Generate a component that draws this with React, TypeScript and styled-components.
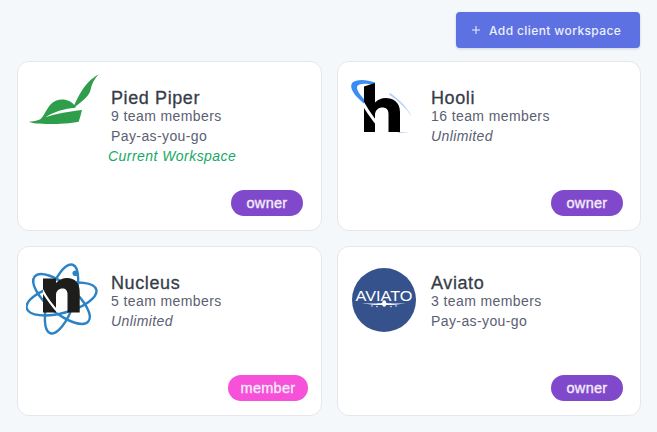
import React from 'react';
import styled, { createGlobalStyle } from 'styled-components';

type Role = 'owner' | 'member';

const GlobalStyle = createGlobalStyle`
  html, body {
    margin: 0;
    padding: 0;
    background-color: #f5f8fb;
    font-family: "Liberation Sans", Arial, sans-serif;
  }
`;

const Page = styled.div`
  width: 657px;
  height: 432px;
  box-sizing: border-box;
  padding: 12px 16px 16px 17px;
  overflow: hidden;
`;

const Toolbar = styled.div`
  display: flex;
  justify-content: flex-end;
  margin-bottom: 13px;
`;

const AddButton = styled.button`
  display: flex;
  align-items: center;
  width: 184px;
  height: 36px;
  margin-right: 1px;
  padding: 0 0 0 15px;
  border: none;
  border-radius: 4px;
  background-color: #5d71e2;
  color: #eef0fc;
  font-family: Inter, sans-serif;
  font-size: 12px;
  font-weight: 500;
  letter-spacing: 0.4px;
  box-shadow: 0 1px 3px rgba(60, 70, 120, 0.2);
`;

const PlusIcon = styled.svg`
  width: 10px;
  height: 10px;
  margin-right: 8px;
`;

const Grid = styled.div`
  display: grid;
  grid-template-columns: 305px 304px;
  grid-auto-rows: 170px;
  column-gap: 15px;
  row-gap: 15px;
`;

const Card = styled.div<{ $narrow?: boolean }>`
  display: flex;
  flex-direction: column;
  box-sizing: border-box;
  padding: 9px ${(props) => (props.$narrow ? '17px' : '18px')} 14px 8px;
  background-color: #ffffff;
  border: 1px solid #e5e7eb;
  border-radius: 12px;
`;

const CardBody = styled.div`
  display: flex;
  flex: 1;
`;

const LogoBox = styled.svg`
  flex: none;
  width: 76px;
  height: 80px;
  margin-right: 9px;
`;

const Details = styled.div`
  padding-top: 19px;
  display: flex;
  flex-direction: column;
`;

const Name = styled.div`
  font-size: 18px;
  line-height: 16px;
  letter-spacing: 0.6px;
  color: #373c49;
  -webkit-text-stroke: 0.3px #373c49;
`;

const Line = styled.div`
  font-size: 14px;
  line-height: 20px;
  letter-spacing: 0.4px;
  color: #5a6072;
`;

const PlanLine = styled(Line)<{ $italic?: boolean }>`
  font-style: ${(props) => (props.$italic ? 'italic' : 'normal')};
`;

const CurrentLine = styled(Line)`
  margin-left: -3px;
  letter-spacing: 0.45px;
  color: #18a865;
  font-style: italic;
`;

const Footer = styled.div`
  display: flex;
  justify-content: flex-end;
`;

const Badge = styled.span<{ $role: Role }>`
  display: flex;
  align-items: center;
  justify-content: center;
  width: ${(props) => (props.$role === 'member' ? '80px' : '72px')};
  height: 26px;
  margin-right: ${(props) => (props.$role === 'member' ? '-5px' : '0')};
  border-radius: 13px;
  background-color: ${(props) => (props.$role === 'member' ? '#f751d9' : '#8049cc')};
  color: #f3ecfa;
  font-size: 14.5px;
  letter-spacing: 0.3px;
  -webkit-text-stroke: 0.35px #f3ecfa;
`;

const PiedPiperLogo = () => (
  <LogoBox viewBox="0 0 76 80">
    <path
      d="M2.7 50.7 C7 50.5 11 50 14.3 48.3 C18 45 20 39 24 34 C28 29.5 33 28 38 28.5 C42 29 46 31 48.3 34 C50 30 53 24 56 19.5 C60 13 66 7 72.7 3.3 C68.5 8 65.5 13 64.5 19 C63.5 24 58 29 49.8 35.2 L49.3 36.7 C39 37.5 27 41 19.3 46.3 C30 42.5 44 40.5 56 39 C55 43 54 47 52.7 50.7 C42 53 20 53.5 11 52.5 C7 52 4.5 51.5 2.7 50.7 Z"
      fill="#2f9e4a"
    />
  </LogoBox>
);

const HooliLogo = () => (
  <LogoBox viewBox="0 0 76 80">
    <path d="M29 11.5 C20 8 10 8 6.5 11.5 C3.5 15 6 20 10 25 C13 28 16 31 19 33.5 L19 29 C14 24 10.5 19 11 15.5 C12 12.5 20 11.5 29 14.5 Z" fill="#3b8cf5" />
    <path d="M44 22 C53 28 61 36 66 46 C60 37 52 29.5 43 23.5 Z" fill="#b5d3f8" />
    <path d="M52 60.8 C56 61.5 60 61.6 63 61 C60 62.2 55 62.2 52 61.8 Z" fill="#a9cbf7" />
    <path
      d="M18 15.5 L29 12 L29 31.5 C32 28.5 35.5 27 39.5 27 C47 27 54 31 54 41 L54 61 L42.5 61 L42.5 43 C42.5 38.5 40 36.5 36.5 36.5 C32.5 36.5 29 39 29 44 L29 61 L18 61 Z"
      fill="#000000"
    />
    <path d="M18 31 C24 42 32 52 40 61.5 L36 61.5 C29 53 23 45 18 37 Z" fill="#ffffff" />
  </LogoBox>
);

const NucleusLogo = () => (
  <LogoBox viewBox="0 0 76 80">
    <g fill="none" stroke="#2b83c6" strokeWidth="2.4">
      <ellipse cx="35.5" cy="43" rx="36" ry="14" transform="rotate(-15 35.5 43)" />
      <ellipse cx="35.5" cy="43" rx="35" ry="14" transform="rotate(40 35.5 43)" />
      <ellipse cx="35.5" cy="43" rx="36" ry="13" transform="rotate(-72 35.5 43)" />
    </g>
    <circle cx="49.3" cy="17.3" r="2.8" fill="#2b83c6" />
    <path
      d="M17 22.5 L30 22.5 L30 27 C33 23.5 37 22 41 22 C49 22 53.7 27 53.7 36 L53.7 56.5 L41.5 56.5 L41.5 38 C41.5 34.5 39.5 32.5 36.5 32.5 C33 32.5 30 35 30 39 L30 56.5 L17 56.5 Z"
      fill="#1d1d1b"
    />
    <path d="M17 33 C21 41 27 49 34 56.5 L31 56.5 C25 50 21 44 17 38 Z" fill="#ffffff" />
  </LogoBox>
);

const AviatoLogo = () => (
  <LogoBox viewBox="0 0 76 80">
    <circle cx="38" cy="44" r="32" fill="#35528d" />
    <text
      x="38"
      y="44.5"
      textAnchor="middle"
      fill="#ffffff"
      fontFamily="Liberation Sans, sans-serif"
      fontSize="15"
      textLength="57"
      lengthAdjust="spacingAndGlyphs"
    >
      AVIATO
    </text>
    <path d="M16 47.2 C25 47.6 33 47.6 36 47 L40 47 C44 47.6 52 47.6 60 47.2 C52 48.6 46 49 41 49 L35.5 49 C30 49 24 48.6 16 47.2 Z" fill="#ffffff" />
    <ellipse cx="38.2" cy="47.5" rx="2" ry="3.2" fill="#ffffff" />
    <g fill="#dfe5f2">
      <circle cx="26" cy="50" r="0.8" />
      <circle cx="31" cy="50.6" r="0.8" />
      <circle cx="45" cy="50.6" r="0.8" />
      <circle cx="50" cy="50" r="0.8" />
    </g>
  </LogoBox>
);

const workspaces = [
  { name: 'Pied Piper', members: '9 team members', plan: 'Pay-as-you-go', italic: false, current: true, role: 'owner' as Role, narrow: false, Logo: PiedPiperLogo },
  { name: 'Hooli', members: '16 team members', plan: 'Unlimited', italic: true, current: false, role: 'owner' as Role, narrow: true, Logo: HooliLogo },
  { name: 'Nucleus', members: '5 team members', plan: 'Unlimited', italic: true, current: false, role: 'member' as Role, narrow: false, Logo: NucleusLogo },
  { name: 'Aviato', members: '3 team members', plan: 'Pay-as-you-go', italic: false, current: false, role: 'owner' as Role, narrow: true, Logo: AviatoLogo },
];

const App: React.FC = () => (
  <Page>
    <GlobalStyle />
    <Toolbar>
      <AddButton>
        <PlusIcon viewBox="0 0 10 10">
          <path d="M5 1v8M1 5h8" stroke="#eef0fc" strokeWidth="1" fill="none" />
        </PlusIcon>
        Add client workspace
      </AddButton>
    </Toolbar>
    <Grid>
      {workspaces.map(({ name, members, plan, italic, current, role, narrow, Logo }) => (
        <Card key={name} $narrow={narrow}>
          <CardBody>
            <Logo />
            <Details>
              <Name>{name}</Name>
              <Line>{members}</Line>
              <PlanLine $italic={italic}>{plan}</PlanLine>
              {current && <CurrentLine>Current Workspace</CurrentLine>}
            </Details>
          </CardBody>
          <Footer>
            <Badge $role={role}>{role}</Badge>
          </Footer>
        </Card>
      ))}
    </Grid>
  </Page>
);

export default App;
